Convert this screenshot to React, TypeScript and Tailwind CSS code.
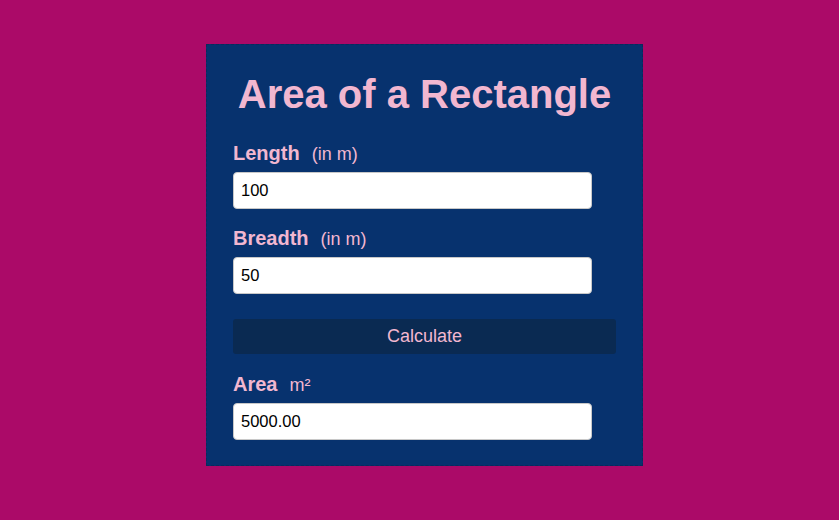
export default function App() {
  return (
    <div className="min-h-[520px] w-full bg-[#ab0a68] pt-[44px] pl-[10px] flex justify-center items-start font-['Liberation_Sans',Arial,sans-serif]">
      <div className="w-[437px] border border-dashed border-[#0a2a5c] bg-[#07326e] px-[26px] pt-[26px] pb-[25px] text-[#f2b7d0]">
        <h1 className="m-0 h-[46px] text-center text-[40px] leading-[46px] font-bold">Area of a Rectangle</h1>

        <div className="mt-[25px] h-[23px] flex items-baseline leading-[23px]">
          <span className="text-[20px] font-bold">Length</span>
          <span className="ml-[12px] text-[18px]">(in m)</span>
        </div>
        <input
          type="text"
          defaultValue="100"
          className="mt-[7px] block h-[37px] w-[359px] rounded-[4px] border border-[#c8c8c8] bg-white pl-[7px] text-[16.5px] text-black outline-none"
        />

        <div className="mt-[18px] h-[23px] flex items-baseline leading-[23px]">
          <span className="text-[20px] font-bold">Breadth</span>
          <span className="ml-[12px] text-[18px]">(in m)</span>
        </div>
        <input
          type="text"
          defaultValue="50"
          className="mt-[7px] block h-[37px] w-[359px] rounded-[4px] border border-[#c8c8c8] bg-white pl-[7px] text-[16.5px] text-black outline-none"
        />

        <button
          type="button"
          className="mt-[25px] block h-[35px] w-full rounded-[3px] bg-[#0a2a52] text-[18px] text-[#f2b7d0]"
        >
          Calculate
        </button>

        <div className="mt-[19px] h-[23px] flex items-baseline leading-[23px]">
          <span className="text-[20px] font-bold">Area</span>
          <span className="ml-[12px] text-[18px]">m²</span>
        </div>
        <input
          type="text"
          readOnly
          value="5000.00"
          className="mt-[7px] block h-[37px] w-[359px] rounded-[4px] border border-[#c8c8c8] bg-white pl-[7px] text-[16.5px] text-black outline-none"
        />
      </div>
    </div>
  )
}
